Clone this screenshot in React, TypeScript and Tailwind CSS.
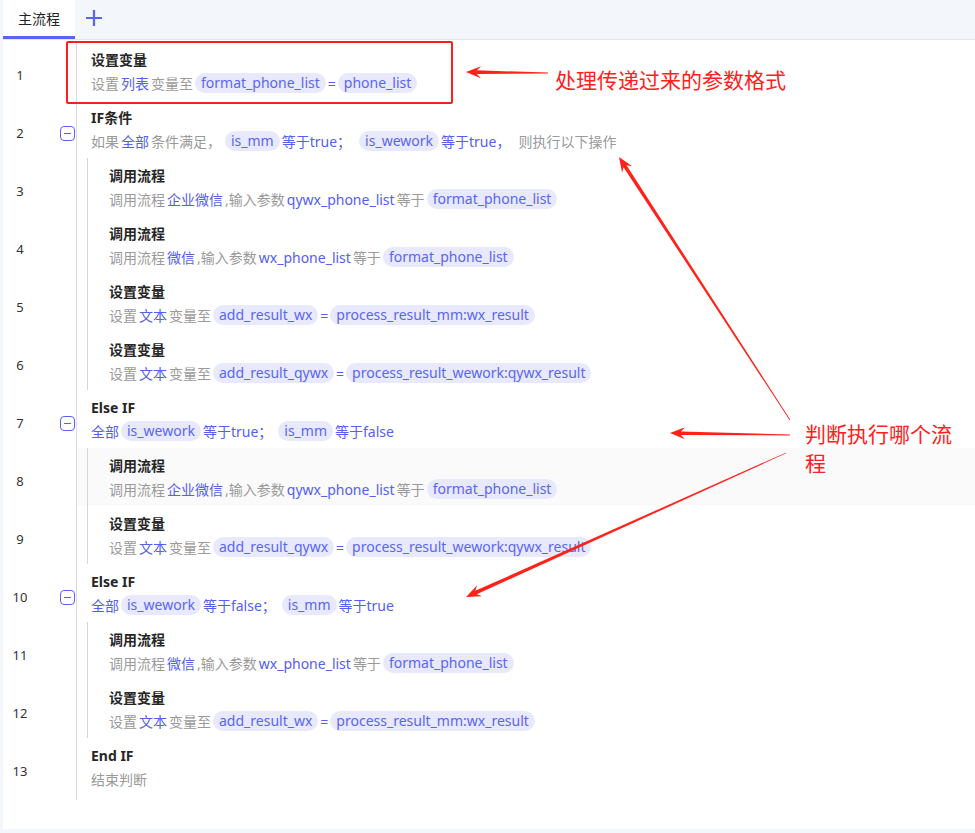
import React from "react";

type Seg = [string, string] | ["s", number];

type Row = {
  title: string;
  sub: Seg[];
  nested?: boolean;
  fold?: boolean;
  active?: boolean;
};

const rows: Row[] = [
  {
    title: "设置变量",
    sub: [["g", "设置"], ["b", "列表"], ["g", "变量至"], ["p", "format_phone_list"], ["b", "="], ["p", "phone_list"]],
  },
  {
    title: "IF条件",
    fold: true,
    sub: [
      ["g", "如果"], ["b", "全部"], ["g", "条件满足，"], ["s", 0], ["p", "is_mm"], ["b", "等于true；"], ["s", 4],
      ["p", "is_wework"], ["b", "等于true，"], ["s", 4], ["g", "则执行以下操作"],
    ],
  },
  {
    title: "调用流程",
    nested: true,
    sub: [["g", "调用流程"], ["b", "企业微信"], ["g", ",输入参数"], ["b", "qywx_phone_list"], ["g", "等于"], ["p", "format_phone_list"]],
  },
  {
    title: "调用流程",
    nested: true,
    sub: [["g", "调用流程"], ["b", "微信"], ["g", ",输入参数"], ["b", "wx_phone_list"], ["g", "等于"], ["p", "format_phone_list"]],
  },
  {
    title: "设置变量",
    nested: true,
    sub: [["g", "设置"], ["b", "文本"], ["g", "变量至"], ["p", "add_result_wx"], ["b", "="], ["p", "process_result_mm:wx_result"]],
  },
  {
    title: "设置变量",
    nested: true,
    sub: [["g", "设置"], ["b", "文本"], ["g", "变量至"], ["p", "add_result_qywx"], ["b", "="], ["p", "process_result_wework:qywx_result"]],
  },
  {
    title: "Else IF",
    fold: true,
    sub: [["b", "全部"], ["p", "is_wework"], ["b", "等于true；"], ["s", 2], ["p", "is_mm"], ["b", "等于false"]],
  },
  {
    title: "调用流程",
    nested: true,
    active: true,
    sub: [["g", "调用流程"], ["b", "企业微信"], ["g", ",输入参数"], ["b", "qywx_phone_list"], ["g", "等于"], ["p", "format_phone_list"]],
  },
  {
    title: "设置变量",
    nested: true,
    sub: [["g", "设置"], ["b", "文本"], ["g", "变量至"], ["p", "add_result_qywx"], ["b", "="], ["p", "process_result_wework:qywx_result"]],
  },
  {
    title: "Else IF",
    fold: true,
    sub: [["b", "全部"], ["p", "is_wework"], ["b", "等于false；"], ["s", 2], ["p", "is_mm"], ["b", "等于true"]],
  },
  {
    title: "调用流程",
    nested: true,
    sub: [["g", "调用流程"], ["b", "微信"], ["g", ",输入参数"], ["b", "wx_phone_list"], ["g", "等于"], ["p", "format_phone_list"]],
  },
  {
    title: "设置变量",
    nested: true,
    sub: [["g", "设置"], ["b", "文本"], ["g", "变量至"], ["p", "add_result_wx"], ["b", "="], ["p", "process_result_mm:wx_result"]],
  },
  {
    title: "End IF",
    sub: [["g", "结束判断"]],
  },
];

function SegView({ seg }: { seg: Seg }) {
  const [kind, val] = seg;
  if (kind === "s") return <span style={{ width: val as number }} className="inline-block" />;
  if (kind === "p")
    return (
      <span className="h-[20px] leading-[20px] px-[6px] rounded-full bg-[#e8e9fd] text-[#5a66f1]">{val}</span>
    );
  if (kind === "b") return <span className="text-[#5360f0]">{val}</span>;
  return <span className="text-[#9a9a9a]">{val}</span>;
}

// tapered annotation arrow, tail -> head
function arrowPoints(x1: number, y1: number, x2: number, y2: number) {
  const dx = x2 - x1;
  const dy = y2 - y1;
  const len = Math.hypot(dx, dy);
  const ux = dx / len;
  const uy = dy / len;
  const nx = -uy;
  const ny = ux;
  const headLen = 15;
  const headW = 6;
  const neck = 11;
  const shaftW = 1.8;
  const tailW = 0.4;
  const p = (d: number, w: number) => `${x2 - ux * d + nx * w},${y2 - uy * d + ny * w}`;
  return [p(len, tailW), p(neck, shaftW), p(headLen, headW), `${x2},${y2}`, p(headLen, -headW), p(neck, -shaftW), p(len, -tailW)].join(" ");
}

function Annotations() {
  return (
    <>
      <div className="absolute left-[66px] top-[41px] w-[387px] h-[63px] border-2 border-[#ff1e1e] rounded-[2px] pointer-events-none" />
      <svg className="absolute inset-0 pointer-events-none" width={975} height={833}>
        <polygon points={arrowPoints(548, 73, 466, 72)} fill="#ff2219" />
        <polygon points={arrowPoints(790, 420, 619, 157)} fill="#ff2219" />
        <polygon points={arrowPoints(790, 435, 670, 433)} fill="#ff2219" />
        <polygon points={arrowPoints(786, 453, 466, 597)} fill="#ff2219" />
      </svg>
      <div className="absolute left-[555px] top-[65px] text-[21px] leading-[30px] font-normal text-[#ff2020] whitespace-nowrap">
        处理传递过来的参数格式
      </div>
      <div className="absolute left-[805px] top-[420px] w-[155px] text-[21px] leading-[29px] font-normal text-[#ff2020]">
        判断执行哪个流程
      </div>
    </>
  );
}

export default function App() {
  return (
    <div className="relative w-[975px] h-[833px] bg-[#f3f6fa] pl-[3px] pb-[4px] flex flex-col font-['Noto_Sans','Noto_Sans_CJK_SC',sans-serif] text-[14px]">
      {/* tabs */}
      <div className="h-[40px] flex items-stretch border-b border-[#e1e6ec] shrink-0">
        <div className="w-[72px] bg-white border-b-[3px] border-[#5865f2] flex items-center justify-center text-[#222] pt-[1px]">
          主流程
        </div>
        <div className="ml-[10px] flex items-center pb-[3px]">
          <svg width="18" height="18" viewBox="0 0 18 18" fill="none" stroke="#5865f2" strokeWidth="2.2">
            <path d="M9 1v16M1 9h16" />
          </svg>
        </div>
      </div>

      {/* flow */}
      <div className="flex-1 bg-white pt-[2px]">
        {rows.map((r, i) => (
          <div key={i} className="flex h-[58px]">
            <div className="w-[73px] shrink-0 flex items-start">
              <div className="w-[34px] pt-[23px] leading-[20px] text-center text-[13px] text-[#333]">{i + 1}</div>
              {r.fold && (
                <div className="ml-[23px] mt-[26px] w-[15px] h-[15px] rounded-[4px] border-[1.5px] border-[#5865f2] flex items-center justify-center">
                  <div className="w-[7px] h-[1.5px] bg-[#5865f2]" />
                </div>
              )}
            </div>
            <div className={`flex-1 border-l border-[#dcdcdc] ${r.active ? "bg-[#fafafa]" : ""}`}>
              <div className={r.nested ? "ml-[10px] h-full border-l border-[#d6d6d6] pl-[21px]" : "pl-[14px] h-full"}>
                <div className="pt-[8px] leading-[20px] font-bold text-[#262626]">{r.title}</div>
                <div className="mt-[2px] h-[22px] flex items-center gap-[2px] whitespace-nowrap">
                  {r.sub.map((s, j) => (
                    <SegView key={j} seg={s} />
                  ))}
                </div>
              </div>
            </div>
          </div>
        ))}
        <div className="h-[4px] w-[74px] border-r border-[#dcdcdc]" />
      </div>

      <Annotations />
    </div>
  );
}
